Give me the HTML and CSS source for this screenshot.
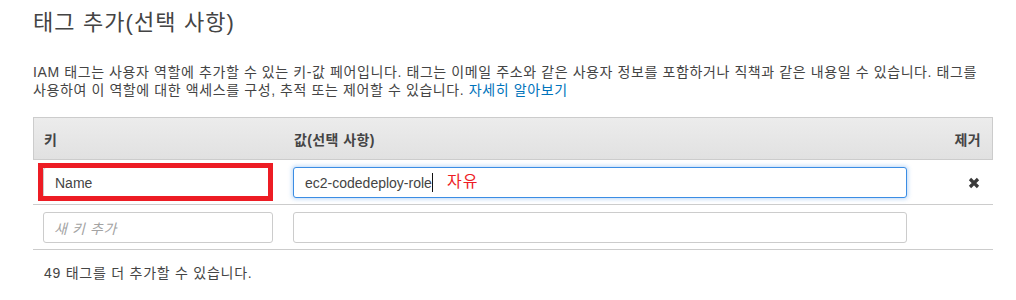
FILE: index.html
```html
<!DOCTYPE html>
<html lang="ko">
<head>
<meta charset="utf-8">
<title>태그 추가</title>
<link rel="stylesheet" href="styles.css">
</head>
<body>
<div class="page">
  <h2 class="title">태그 추가(선택 사항)</h2>
  <p class="desc">IAM 태그는 사용자 역할에 추가할 수 있는 키-값 페어입니다. 태그는 이메일 주소와 같은 사용자 정보를 포함하거나 직책과 같은 내용일 수 있습니다. 태그를 사용하여 이 역할에 대한 액세스를 구성, 추적 또는 제어할 수 있습니다. <a class="link" href="#">자세히 알아보기</a></p>

  <div class="tags">
    <div class="row head">
      <div class="cell">키</div>
      <div class="cell">값(선택 사항)</div>
      <div class="cell remove">제거</div>
    </div>
    <div class="row">
      <div class="cell">
        <div class="mark-wrap">
          <div class="field">Name</div>
          <span class="red-box"></span>
        </div>
      </div>
      <div class="cell">
        <div class="note-wrap">
          <div class="field focus">ec2-codedeploy-role<span class="caret"></span></div>
          <span class="note">자유</span>
        </div>
      </div>
      <div class="cell remove">
        <svg class="x" width="12" height="12" viewBox="0 0 12 12"><path d="M2 2 L10 10 M10 2 L2 10" stroke="#3a3a3a" stroke-width="3.2" stroke-linecap="butt"/></svg>
      </div>
    </div>
    <div class="row">
      <div class="cell"><div class="field placeholder">새 키 추가</div></div>
      <div class="cell"><div class="field"></div></div>
      <div class="cell remove"></div>
    </div>
  </div>
  <p class="foot">49 태그를 더 추가할 수 있습니다.</p>
</div>
</body>
</html>
```
FILE: styles.css
```css
html, body {
  margin: 0;
  padding: 0;
  background: #ffffff;
}
body {
  font-family: "Liberation Sans", "Noto Sans CJK KR", sans-serif;
  color: #444444;
  font-size: 14px;
  word-break: keep-all;
}
.page {
  padding: 9px 23px 0 33px;
}
.title {
  margin: 0;
  font-size: 22px;
  font-weight: normal;
  line-height: 28px;
  color: #444444;
  letter-spacing: 1.1px;
}
.desc {
  margin: 26px 0 0 0;
  line-height: 18px;
  letter-spacing: 0.6px;
}
.link {
  color: #0073bb;
  text-decoration: none;
}
.tags {
  margin-top: 18px;
}
.row {
  display: grid;
  grid-template-columns: 250px 634px 1fr;
  border-bottom: 1px solid #cccccc;
}
.row.head {
  height: 41px;
  align-items: center;
  border: 1px solid #cccccc;
  background: linear-gradient(#ececec, #e1e1e1);
  font-weight: bold;
  letter-spacing: 0.4px;
}
.cell {
  padding: 7px 10px 6px 10px;
}
.head .cell {
  padding: 0 10px;
}
.cell.remove {
  display: flex;
  align-items: center;
  justify-content: flex-end;
  padding-right: 13px;
}
.head .cell.remove {
  padding-right: 11px;
}
.field {
  box-sizing: border-box;
  height: 31px;
  border: 1px solid #cccccc;
  border-radius: 3px;
  padding: 0 11px;
  display: flex;
  align-items: center;
  background: #ffffff;
  color: #444444;
}
.field.focus {
  border-color: #3b8de4;
  box-shadow: 0 0 4px 1px rgba(59, 141, 228, 0.35);
}
.field.placeholder {
  color: #a3a3a3;
  font-style: italic;
  padding-left: 10px;
  letter-spacing: 0.6px;
}
.caret {
  display: inline-block;
  width: 1px;
  height: 19px;
  background: #111111;
  margin-left: 0;
}
.mark-wrap, .note-wrap {
  position: relative;
}
.red-box {
  position: absolute;
  left: -5px;
  top: -4px;
  width: 235px;
  height: 38px;
  box-sizing: border-box;
  border: 5px solid #ed1c24;
}
.note {
  position: absolute;
  left: 154px;
  top: 5px;
  font-size: 16px;
  line-height: 20px;
  color: #ee1c25;
  letter-spacing: 1px;
}
.x {
  display: block;
}
.foot {
  margin: 14px 0 0 11px;
  line-height: 18px;
  letter-spacing: 0.75px;
}
```
